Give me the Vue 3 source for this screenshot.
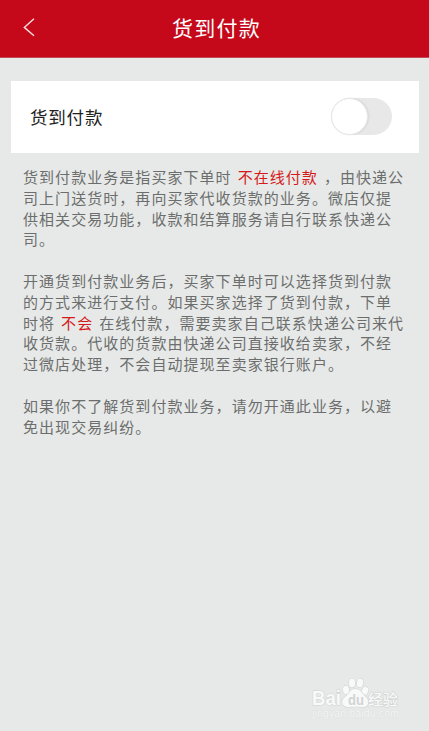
<template>
    <div class="page">
        <header class="navbar">
            <svg class="back" viewBox="0 0 12 19" width="12" height="19">
                <path d="M11 0.8 L1.3 9.4 L11 17.8" />
            </svg>
            <h1 class="title">货到付款</h1>
        </header>

        <section class="card">
            <span class="label">货到付款</span>
            <button class="switch" :class="{ on: enabled }" @click="enabled = !enabled">
                <span class="knob"></span>
            </button>
        </section>

        <main class="notes">
            <p v-for="(lines, i) in paragraphs" :key="i">
                <span v-for="(line, j) in lines" :key="j" class="line">
                    <span v-for="(part, k) in line" :key="k" :class="{ warn: k === 1 }">{{ part }}</span>
                </span>
            </p>
        </main>

        <svg class="watermark" viewBox="0 0 96 46" width="96" height="46">
            <g class="mark">
                <text x="3" y="28.5" font-size="20" font-weight="700" textLength="29" lengthAdjust="spacingAndGlyphs">Bai</text>
                <ellipse cx="37" cy="14" rx="3.2" ry="4.2" transform="rotate(-15 37 14)" />
                <ellipse cx="43" cy="7" rx="3.1" ry="4.4" />
                <ellipse cx="51" cy="7" rx="3.1" ry="4.4" transform="rotate(10 51 7)" />
                <ellipse cx="56" cy="15" rx="3.2" ry="4.2" transform="rotate(20 56 15)" />
                <path d="M46 13 C41 13 40 18 36 21 C31 25 33 31 39 31 C43 30.5 50 30.5 54 31 C60 31 61 25 57 21 C53 18 52 13 46 13 Z" />
                <text class="du" x="39" y="28.5" font-size="14" font-weight="700" textLength="16" lengthAdjust="spacingAndGlyphs">du</text>
                <text class="cjk" x="59" y="28.5" font-size="15" font-weight="500" textLength="30">经验</text>
            </g>
            <text class="site" x="3" y="40.5" font-size="10.5" textLength="87">jingyan.baidu.com</text>
        </svg>
    </div>
</template>

<script setup>
import { ref } from 'vue'

const enabled = ref(false)

// each line is a list of parts, the second part is the highlighted one
const paragraphs = [
    [
        ['货到付款业务是指买家下单时', '不在线付款', '，由快递公'],
        ['司上门送货时，再向买家代收货款的业务。微店仅提'],
        ['供相关交易功能，收款和结算服务请自行联系快递公'],
        ['司。']
    ],
    [
        ['开通货到付款业务后，买家下单时可以选择货到付款'],
        ['的方式来进行支付。如果买家选择了货到付款，下单'],
        ['时将', '不会', '在线付款，需要卖家自己联系快递公司来代'],
        ['收货款。代收的货款由快递公司直接收给卖家，不经'],
        ['过微店处理，不会自动提现至卖家银行账户。']
    ],
    [
        ['如果你不了解货到付款业务，请勿开通此业务，以避'],
        ['免出现交易纠纷。']
    ]
]
</script>

<style>
body {
    background: #e7e9e8;
}
</style>

<style scoped>
.page {
    position: relative;
    box-sizing: border-box;
    height: 731px;
    overflow: hidden;
    background: #e7e9e8;
    font-family: "KaiTi", "Noto Sans CJK SC", sans-serif;
}

.navbar {
    display: grid;
    grid-template-columns: 60px 1fr 60px;
    align-items: center;
    box-sizing: border-box;
    height: 58px;
    background: #c5091b;
    border-bottom: 1px solid #c04a55;
}

.back {
    margin: -3px 0 0 23px;
    fill: none;
    stroke: #fbdde0;
    stroke-width: 1.4;
}

.title {
    margin: -3px 0 0 4px;
    color: #fff;
    font-size: 21px;
    font-weight: 400;
    line-height: 30px;
    letter-spacing: 1.2px;
    text-align: center;
}

.card {
    display: flex;
    align-items: center;
    justify-content: space-between;
    box-sizing: border-box;
    height: 72px;
    margin: 23px 10px 0 11px;
    padding: 0 27px 0 19px;
    background: #fff;
}

.label {
    margin-top: -2px;
    color: #222;
    font-size: 17.5px;
    letter-spacing: 0.8px;
}

.switch {
    display: block;
    width: 61px;
    height: 37px;
    margin-top: -1px;
    padding: 0;
    border: 0;
    border-radius: 19px;
    background: #e8e8e8;
}

.knob {
    display: block;
    box-sizing: border-box;
    width: 37px;
    height: 37px;
    border: 1px solid #e6e6e6;
    border-radius: 50%;
    background: #fff;
    box-shadow: 1px 0 2px rgba(0, 0, 0, 0.08);
}

.switch.on {
    background: #c5091b;
}

.switch.on .knob {
    margin-left: 24px;
}

.notes {
    padding: 14px 0 0 23px;
    color: #6c6e6d;
    font-size: 15px;
    line-height: 20.8px;
    letter-spacing: 1.05px;
}

.notes p {
    margin: 0 0 20.8px;
}

.line {
    display: block;
    white-space: nowrap;
}

.warn {
    margin: 0 6px;
    color: #d41a1a;
}

.watermark {
    position: absolute;
    right: 24px;
    bottom: 9px;
    font-family: "Liberation Sans", sans-serif;
}

.mark {
    fill: #f8f9f9;
    stroke: #d2d4d3;
    stroke-width: 1.2;
    paint-order: stroke;
}

.du {
    fill: #d2d4d3;
    stroke: none;
}

.cjk {
    font-family: "Noto Sans CJK SC", sans-serif;
}

.site {
    fill: #f3f4f4;
    stroke: #dcdedd;
    stroke-width: 0.7;
    paint-order: stroke;
}
</style>
